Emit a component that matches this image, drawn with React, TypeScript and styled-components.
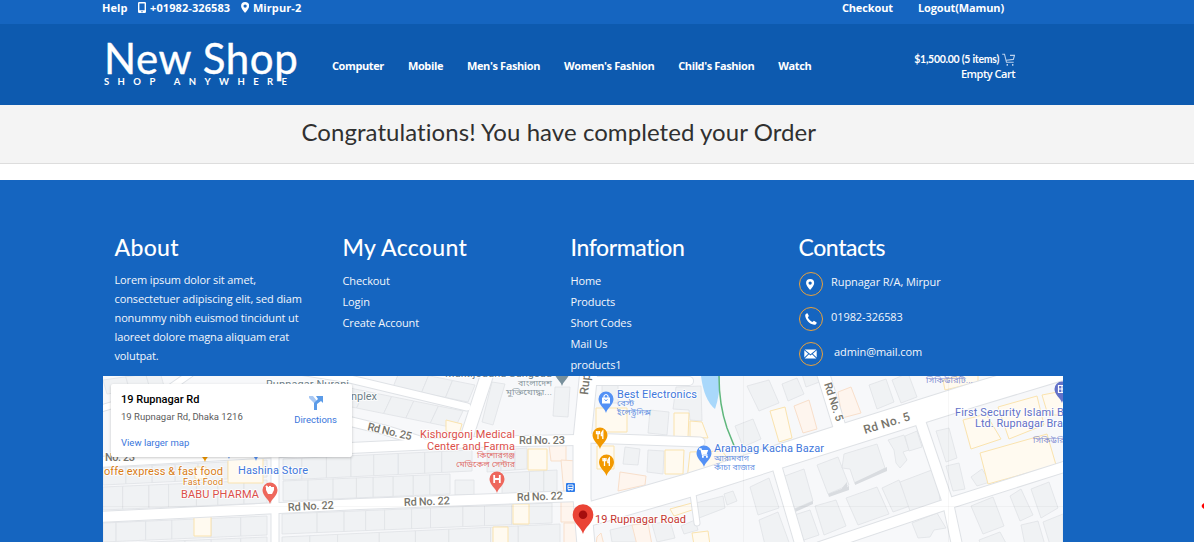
import React from "react";
import styled, { createGlobalStyle } from "styled-components";

const GlobalStyle = createGlobalStyle`
  * { box-sizing: border-box; }
  body { margin: 0; background: #fff; overflow: hidden; font-family: "Open Sans", sans-serif; font-size: 11px; }
`;
const display = `"Lato", sans-serif`;

const Page = styled.div`width: 1194px; height: 542px; overflow: hidden; background: #fff;`;
const TopBar = styled.div`
  height: 24px; background: #1565c0; color: #fff; font-weight: 700; line-height: 16px;
  padding: 0 190px 0 102px; display: flex; justify-content: space-between;
`;
const Group = styled.div<{ $gap: number; $track: number }>`display: flex; gap: ${(p) => p.$gap}px; letter-spacing: ${(p) => p.$track}px;`;
const TopItem = styled.span`display: flex; gap: 4px; white-space: nowrap; svg { margin-top: 2px; }`;
const Header = styled.header`
  height: 81px; background: #0d5aaf; color: #fff; padding-left: 104px; display: flex;
`;
const Logo = styled.div`width: 228px; padding-top: 11px; font-family: ${display}; white-space: nowrap;`;
const LogoName = styled.div`font-size: 42px; line-height: 46px; letter-spacing: 0.6px; -webkit-text-stroke: 0.4px #fff;`;
const LogoTag = styled.div`font-size: 9.5px; line-height: 10px; letter-spacing: 8.4px; font-weight: 700; margin-top: -4px;`;
const Nav = styled.nav`display: flex; gap: 24px; width: 582px; padding-top: 34px; font-weight: 700; letter-spacing: -0.39px; line-height: 16px; white-space: nowrap;`;
const Cart = styled.div`width: 101px; padding-top: 27px; display: flex; flex-direction: column; align-items: flex-end; line-height: 16px; white-space: nowrap;`;
const CartTotal = styled.div`font-family: ${display}; font-weight: 700; font-size: 10.5px; letter-spacing: -0.27px; display: flex; gap: 3px; svg { margin-top: 2px; }`;
const EmptyCart = styled.div`font-weight: 600; letter-spacing: -0.5px; margin-top: -1px;`;
const Banner = styled.div`
  height: 59px; background: #f4f4f4; border-bottom: 1px solid #ddd; padding: 11px 0 0 301.500px;
  font-family: ${display}; font-size: 24px; line-height: 32px; letter-spacing: 0.06px; color: #303030; white-space: nowrap;
`;
const Footer = styled.footer`margin-top: 16px; height: 362px; background: #1565c0; color: #f3f6fb; padding-left: 103px;`;
const Columns = styled.div`height: 196px; padding: 51px 0 0 11.500px; display: flex; letter-spacing: -0.12px;`;
const Column = styled.section`width: 228px; white-space: nowrap;`;
const Heading = styled.h3<{ $track: number }>`margin: 0; color: #fff; font: 500 23px/32px ${display}; letter-spacing: ${(p) => p.$track}px;`;
const About = styled.p`margin: 7px 0 0; line-height: 19px;`;
const Links = styled.div`display: flex; flex-direction: column; margin-top: 7px; line-height: 21px;`;
const Contact = styled.div<{ $gap?: number }>`display: flex; gap: ${(p) => p.$gap ?? 8.5}px; height: 35px; line-height: 20px; letter-spacing: -0.08px;`;
const Contacts = styled.div`margin-top: 9px;`;
const Ring = styled.span`
  width: 24px; height: 24px; border: 1px solid #e9a13b; border-radius: 50%;
  display: flex; align-items: center; justify-content: center;
`;
const MapFrame = styled.div`position: relative; width: 960px; height: 166px; overflow: hidden; font-family: Roboto, sans-serif;`;
const PlaceCard = styled.div`
  position: absolute; left: 8px; top: 8px; width: 241px; height: 73px; background: #fff; border-radius: 2px;
  box-shadow: 0 1px 3px rgba(0,0,0,.22); padding: 8px 15px 0 10px; display: flex; justify-content: space-between; white-space: nowrap;
`;
const PlaceName = styled.div`font-size: 11px; line-height: 15px; font-weight: 500; color: #000;`;
const PlaceAddress = styled.div`font-size: 9.5px; line-height: 18px; margin-top: 1px; color: #5b5b5b;`;
const PlaceLink = styled.div`font-size: 9.5px; line-height: 14px; margin-top: 10px; color: #3a76dc;`;
const Directions = styled.div`font-size: 9.5px; line-height: 14px; color: #3a76dc; display: flex; flex-direction: column; align-items: center; padding-top: 3px; gap: 3px;`;
const Notice = styled.svg`position: absolute; left: 1201px; top: 503px;`;

const Marker = ({ h }: { h: number }) => (
  <svg width={h * 0.75} height={h} viewBox="0 0 9 12" fill="#fff"><path fillRule="evenodd" d="M4.5 0A4.4 4.4 0 0 0 .1 4.4C.1 7.6 4.5 12 4.5 12s4.4-4.4 4.4-7.6A4.4 4.4 0 0 0 4.5 0Zm0 2.6a1.8 1.8 0 1 1 0 3.6 1.8 1.8 0 0 1 0-3.6Z" /></svg>
);
const Phone = () => (
  <svg width="8" height="11" viewBox="0 0 8 11"><path fill="#fff" fillRule="evenodd" d="M1.2 0h5.6Q8 0 8 1.2v8.6Q8 11 6.8 11H1.2Q0 11 0 9.800V1.200Q0 0 1.200 0ZM1.400 1.500v6.800h5.200V1.500ZM3.300 9.200v1h1.400v-1Z" /></svg>
);
const Handset = () => (
  <svg width="12" height="12" viewBox="0 0 12 12" fill="#fff"><path d="M2.500.2 3.900 2.900 2.800 4.200C3.500 6 5.600 8.200 7.500 9l1.400-1.200 2.800 1.600c0 1.500-1.200 2.500-2.600 2.400C4.500 11.400.4 6.500.2 2.600.2 1.200 1.100.2 2.500.2Z" /></svg>
);
const Envelope = () => (
  <svg width="13" height="10" viewBox="0 0 13 10"><path fill="#fff" d="M.7.400h11.600L6.500 5.200ZM.3 1.300 4.200 4.700.3 8.600ZM12.700 1.300 8.800 4.700l3.900 3.900ZM5 5.300l1.500 1.200L8 5.300l4.300 4.200H.7Z" /></svg>
);
const CartIcon = () => (
  <svg width="13" height="13" viewBox="0 0 13 13" fill="none" stroke="#b9d0ec" strokeWidth="1.100"><path d="M.2 1.200h2.300l2 8.100h7.200M4.300 7.200l7-.8 1.200-4H8" /><path d="M4.600 11.800h1.400M10 11.800h1.400" strokeWidth="1.700" /></svg>
);

/** A strip of adjoining plots between two points, cut at the given fractions. */
const Plots = ({ x, y, x2, y2, h, cuts, lean = 0 }: { x: number; y: number; x2: number; y2: number; h: number; cuts: number[]; lean?: number }) => {
  const c = [0, ...cuts, 1];
  const at = (t: number) => [x + (x2 - x) * t, y + (y2 - y) * t];
  return (
    <>
      {c.slice(1).map((t, i) => {
        const [ax, ay] = at(c[i]);
        const [bx, by] = at(t);
        return <path key={i} d={`M${ax} ${ay}L${bx} ${by}L${bx + lean} ${by + h}L${ax + lean} ${ay + h}Z`} />;
      })}
    </>
  );
};

const roads: [string, number][] = [
  ["M280 368L350 379L467 407", 7],
  ["M103 408L170 388L190 374", 6],
  ["M340 419L385 430L420 441", 9],
  ["M100 462L350 448L476 442L578 440", 10],
  ["M488 372L465 442", 12],
  ["M100 517L360 504L580 496", 10],
  ["M275 450V545", 7],
  ["M589 370L582 440L582 498L586 545", 17],
  ["M586 438L700 442", 9],
  ["M592 381L689 381", 8],
  ["M586 515L690 485L840 437L970 396L1070 366", 23],
  ["M822 370L842 435", 12],
  ["M693 494L697 523", 5],
  ["M775 460L800 545", 9],
  ["M918 415L948 503L957 545", 10],
  ["M820 547L947 504L1070 465", 10],
];
const buildings = [
  "M492 382L505 384L493 425L482 422Z", "M555 387H570L568 417L553 416Z", "M455 480H474V495H455Z",
  "M602 385H618V403H602Z", "M676 387L701 386L702 421L690 420L689 410L673 409Z",
  "M650 410L669 412L667 435L648 433Z", "M625 447L640 449L638 465L623 464Z", "M648 450L664 451L663 474L647 472Z",
  "M747 386L769 380L779 403L759 411Z", "M782 384L797 378L804 394L788 401Z", "M802 374L820 374L822 381L806 387Z",
  "M735 426L753 419L761 439L743 447Z", "M696 503L723 496L725 508L699 518Z", "M724 494L733 491L737 501L727 505Z",
  "M750 487L769 478L779 508L758 515Z", "M759 520L778 512L790 545H765Z", "M782 477L804 469L813 501L792 510Z",
  "M817 465L838 457L849 485L828 494Z", "M791 516L810 510L819 535L798 542Z", "M815 506L836 500L846 526L824 535Z",
  "M844 454L877 444L885 468L855 484L850 469L842 468Z", "M869 385L886 379L894 402L877 409Z", "M892 380L908 373L917 397L901 403Z",
  "M888 440L904 435L909 450L903 452L907 460L900 468L896 463L894 450Z", "M905 436L917 431L922 447L909 451Z",
  "M846 498L877 487L889 514L858 525Z", "M882 488L899 480L910 506L893 512Z", "M900 482L937 468L940 502L910 511Z",
  "M936 431L949 428L957 458L946 462Z", "M946 466L959 463L965 489L953 491Z", "M971 477L982 469L990 482L977 486Z",
  "M971 506L993 497L1004 526L983 534Z", "M1010 496L1021 489L1033 515L1020 521Z", "M1031 489L1049 482L1058 508L1041 518Z",
  "M912 523L937 513L946 528L934 530L930 537L918 538Z", "M979 540L1000 532L1007 545H981Z", "M1021 525L1038 521L1045 545H1025Z", "M1043 522L1063 514V545H1050Z",
  "M610 530L632 525L638 542H612Z", "M652 524L670 521L675 538L657 542Z", "M681 526L695 520L698 530L684 534Z",
];
const shops = [
  "M195 467H206V479H195Z", "M228 458H263V483H228Z", "M194 516H211V536H194Z", "M446 420L462 424L459 434L446 431Z",
  "M528 449H547V470H528Z", "M513 504H529V524H513Z", "M493 527H508V545H493Z", "M596 408H627V432H596Z",
  "M597 446H614V469H597Z", "M674 413H689L688 438H674Z", "M690 421L702 422L708 438L690 437Z", "M665 450H684L683 474H665Z",
  "M690 452L722 451L735 468L687 480Z", "M770 411L785 407L792 438L779 442Z", "M670 509L692 503L695 509L674 516Z",
  "M692 533L708 531L710 545H694Z", "M963 420L986 414L1001 439L971 449Z", "M998 407L1037 396L1044 425L1009 439Z",
  "M1042 395L1068 390V415H1048Z", "M980 453L1047 434L1056 465L988 484Z", "M943 380L978 371V382L945 390Z",
];
const arcades = ["M549 445H566V461H551Z", "M561 460L578 461L580 492L564 494Z", "M561 498L575 500V522H561Z", "M564 523H580V545H564Z",
  "M620 472L646 476L645 485L618 491Z", "M794 406L809 400L817 429L803 433Z", "M838 392L851 387L861 413L842 418Z", "M597 537L601 533L604 545H596Z", "M632 525L648 523L652 545H637Z"];

const Pin = ({ x, y, color, s = 1, children }: { x: number; y: number; color: string; s?: number; children?: React.ReactNode }) => (
  <g transform={`translate(${x} ${y}) scale(${s})`}>
    <path d="M0 0C-1.200-5-7.500-8-7.500-14A7.500 7.500 0 0 1 7.500-14C7.500-8 1.200-5 0 0Z" fill={color} />{children}
  </g>
);
const Fork = () => <path d="M-3.500-18v2.500h3V-18M-2-18v8M2.800-10v-8q-2 2-1.500 4.500H2.800" fill="none" stroke="#fff" strokeWidth="1.300" />;

type LabelProps = { x: number; y: number; w?: number; size?: number; color: string; rotate?: number; children: string };
const Label = ({ x, y, w, size = 11, color, rotate = 0, children }: LabelProps) => (
  <text x={x} y={y} textLength={w} fontSize={size} fill={color} stroke="#fff" strokeWidth="2" strokeOpacity=".8" paintOrder="stroke"
    strokeLinejoin="round" fontWeight={color === road ? 500 : 400} transform={`rotate(${rotate} ${x} ${y})`}>{children}</text>
);
const Bengali = ({ x, y, w, color, children }: LabelProps) => (
  <text x={x} y={y} textLength={w} lengthAdjust="spacingAndGlyphs" fontSize="8.500" fill={color} fillOpacity=".8">{children}</text>
);

const road = "#77756c", red = "#dc4f4a", blue = "#3f78dc", amber = "#d97d17", slate = "#6d7f88", violet = "#6271c8";

const CityMap = () => (
  <svg width="960" height="166" viewBox="103 376 960 166" fontFamily='Roboto, "Noto Sans Bengali", "Noto Sans", sans-serif' display="block">
    <path d="M103 376h960v166H103Z" fill="#f7f8fa" />
    <g fill="#f0f2f4" stroke="#dfe2e6" strokeWidth=".8">
      <Plots x={103} y={468} x2={267} y2={460} h={17} cuts={[0.14, 0.3, 0.44, 0.58, 0.76, 0.9]} />
      <Plots x={103} y={487} x2={267} y2={480} h={23} cuts={[0.12, 0.28, 0.4, 0.57, 0.7, 0.86]} />
      <Plots x={283} y={459} x2={472} y2={450} h={21} cuts={[0.1, 0.23, 0.36, 0.48, 0.61, 0.75, 0.84]} />
      <Plots x={283} y={481} x2={450} y2={474} h={20} cuts={[0.15, 0.3, 0.44, 0.54, 0.66, 0.78, 0.88]} />
      <Plots x={487} y={451} x2={527} y2={448} h={21} cuts={[0.35, 0.7]} />
      <Plots x={502} y={473} x2={557} y2={470} h={21} cuts={[0.5, 0.76]} />
      <Plots x={103} y={523} x2={267} y2={516} h={19} cuts={[0.08, 0.26, 0.42, 0.66, 0.84]} />
      <Plots x={103} y={544} x2={267} y2={537} h={19} cuts={[0.13, 0.3, 0.5, 0.66, 0.84]} />
      <Plots x={282} y={514} x2={552} y2={503} h={20} cuts={[0.13, 0.23, 0.31, 0.38, 0.48, 0.55, 0.67, 0.75, 0.85]} />
      <Plots x={282} y={537} x2={560} y2={524} h={20} cuts={[0.1, 0.2, 0.35, 0.48, 0.6, 0.75, 0.85]} />
      <Plots x={340} y={386} x2={463} y2={411} h={17} cuts={[0.2, 0.42, 0.6, 0.8]} lean={-8} />
      <Plots x={400} y={370} x2={475} y2={385} h={17} cuts={[0.38, 0.7]} lean={-7} />
      <Plots x={103} y={380} x2={160} y2={372} h={14} cuts={[0.4, 0.75]} lean={4} />
      {buildings.map((d) => <path key={d} d={d} />)}
    </g>
    <path d="M828 494L849 486V490L829 497ZM792 510L813 501V504L793 513ZM855 482L887 467V471L855 485ZM842 488L847 482V487L842 491Z" fill="#d9dce0" />
    <g fill="#fffaf0" stroke="#fae3ae" strokeWidth="1">{shops.map((d) => <path key={d} d={d} />)}</g>
    <g fill="#fef5ee" stroke="#f8dfcb" strokeWidth="1">{arcades.map((d) => <path key={d} d={d} />)}</g>
    <g fill="none" strokeLinejoin="round">
      {roads.map(([d, w]) => <path key={d} d={d} stroke="#dfe2e6" strokeWidth={w + 2} strokeLinecap="round" />)}
      {roads.map(([d, w]) => <path key={d} d={d} stroke="#fff" strokeWidth={w} strokeLinecap="round" />)}
    </g>
    <path d="M701 376H720Q720 395 715 409Q704 400 701 376Z" fill="#a9d8fb" />
    <path d="M719 376Q719 405 727 428L735 448" fill="none" stroke="#5fb77c" strokeWidth="1.500" />
    <path d="M103 506.500H1063M743.500 376V542M948.500 376V542" stroke="#000" strokeOpacity=".03" />

    <Label x={266} y={388} w={83} color={slate}>Rupnagar Nurani</Label>
    <Label x={351} y={400} w={26} color={slate}>nplex</Label>
    <Label x={445} y={377} w={107} color={slate}>Muktijoddha Sangsad</Label>
    <Bengali x={518} y={386} w={34} color={slate}>বাংলাদেশ</Bengali>
    <Bengali x={506} y={395} w={46} color={slate}>মুক্তিযোদ্ধা...</Bengali>
    <Label x={367} y={430} w={45} color={road} rotate={13}>Rd No. 25</Label>
    <Label x={519} y={444} w={46} color={road}>Rd No. 23</Label>
    <Label x={105} y={461} w={30} color={road}>No. 23</Label>
    <Label x={288} y={511} w={46} color={road} rotate={-3}>Rd No. 22</Label>
    <Label x={404} y={506} w={46} color={road} rotate={-2}>Rd No. 22</Label>
    <Label x={517} y={501} w={46} color={road} rotate={-2}>Rd No. 22</Label>
    <Label x={588} y={395} size={12} color={road} rotate={-84}>Rupnagar Rd</Label>
    <Label x={824} y={384} w={40} color={road} rotate={72}>Rd No. 5</Label>
    <Label x={865} y={434} w={48} size={12} color={road} rotate={-17}>Rd No. 5</Label>
    <Label x={420} y={438} w={95} color={red}>Kishorgonj Medical</Label>
    <Label x={427} y={450} w={88} color={red}>Center and Farma</Label>
    <Bengali x={477} y={458} w={38} color={red}>কিশোরগঞ্জ</Bengali>
    <Bengali x={456} y={467} w={59} color={red}>মেডিকেল সেন্টার</Bengali>
    <Label x={181} y={498} w={78} color={red}>BABU PHARMA</Label>
    <Label x={104} y={475} w={119} color={amber}>offe express &amp; fast food</Label>
    <Label x={183} y={485} w={40} size={9} color={amber}>Fast Food</Label>
    <Label x={238} y={474} w={70} color={blue}>Hashina Store</Label>
    <Label x={617} y={398} w={80} color={blue}>Best Electronics</Label>
    <Bengali x={617} y={406} w={17} color={blue}>বেস্ট</Bengali>
    <Bengali x={617} y={415} w={34} color={blue}>ইলেক্ট্রনিক্স</Bengali>
    <Label x={714} y={452} w={110} color={blue}>Arambag Kacha Bazar</Label>
    <Bengali x={714} y={461} w={35} color={blue}>আরামবাগ</Bengali>
    <Bengali x={714} y={470} w={41} color={blue}>কাঁচা বাজার</Bengali>
    <Bengali x={926} y={383} w={47} color={violet}>সিকিউরিটি...</Bengali>
    <Label x={955} y={416} w={115} color={violet}>First Security Islami Ba</Label>
    <Label x={975} y={427} w={94} color={violet}>Ltd. Rupnagar Bran</Label>
    <Bengali x={1033} y={443} w={46} color={violet}>সিকিউরিটি...</Bengali>
    <Label x={595} y={523} w={91} color="#c5352f">19 Rupnagar Road</Label>

    <Pin x={497} y={493} color="#ee675c"><path d="M-2.800-18v8M2.800-18v8M-2.800-14h5.600" stroke="#fff" strokeWidth="1.800" /></Pin>
    <Pin x={270} y={504} color="#ee675c"><path d="M-4-17h8v3l-2 4h-4l-2-4Z" fill="#fff" /><path d="M-4-18l2 2M0-18v1" stroke="#fff" strokeWidth="2" /></Pin>
    <Pin x={606} y={413} color="#5491f5"><path d="M-4-15.500h8v6h-8Z" fill="#fff" /><path d="M-2-15v-2q2-3 4 0v2" fill="none" stroke="#fff" strokeWidth="1.200" /><path d="M-1.500-13.500q1.500 2.500 3 0" fill="none" stroke="#5491f5" /></Pin>
    <Pin x={600} y={449} color="#f29900"><Fork /></Pin>
    <Pin x={606.500} y={476} color="#f29900"><Fork /></Pin>
    <Pin x={704} y={467} color="#5491f5"><path d="M-5-18h2l1.500 6h5" fill="none" stroke="#fff" strokeWidth="1.300" /><path d="M-2.800-17h7l-1.500 4h-4.500ZM-2-11h1.800v1.800H-2ZM2-11h1.800v1.800H2Z" fill="#fff" /></Pin>
    <Pin x={1062} y={403} color={violet}><path d="M-3.500-17.500h7v7h-7ZM0-17.500v7M-3.500-14h7" fill="none" stroke="#fff" strokeWidth="1.200" /></Pin>
    <Pin x={562} y={386} color="#78909c" />
    <Pin x={205} y={462} color="#f29900" /><Pin x={229} y={459} color="#5491f5" /><Pin x={256} y={461} color="#5491f5" />
    <Pin x={583} y={534} color="#ea4335" s={1.380}><circle cy="-14" r="3.100" fill="#a50e0e" /></Pin>
    <rect x="566" y="483" width="9" height="9" rx="1" fill="#2d7bea" /><path d="M568 485h5v4.500h-5ZM568 487.500h5M569 490v1M572 490v1" stroke="#fff" fill="none" strokeWidth=".9" />
  </svg>
);

export default function App() {
  return (
    <>
      <GlobalStyle />
      <Page>
        <TopBar>
          <Group $gap={10.5} $track={0.08}>
            <TopItem>Help</TopItem>
            <TopItem><Phone />+01982-326583</TopItem>
            <TopItem><Marker h={11} />Mirpur-2</TopItem>
          </Group>
          <Group $gap={25} $track={-0.13}><TopItem>Checkout</TopItem><TopItem>Logout(Mamun)</TopItem></Group>
        </TopBar>
        <Header>
          <Logo><LogoName>New Shop</LogoName><LogoTag>SHOP ANYWHERE</LogoTag></Logo>
          <Nav>{["Computer", "Mobile", "Men's Fashion", "Women's Fashion", "Child's Fashion", "Watch"].map((t) => <span key={t}>{t}</span>)}</Nav>
          <Cart><CartTotal>$1,500.00 (5 items)<CartIcon /></CartTotal><EmptyCart>Empty Cart</EmptyCart></Cart>
        </Header>
        <Banner>Congratulations! You have completed your Order</Banner>
        <Footer>
          <Columns>
            <Column><Heading $track={0.3}>About</Heading>
              <About>Lorem ipsum dolor sit amet,<br />consectetuer adipiscing elit, sed diam<br />nonummy nibh euismod tincidunt ut<br />laoreet dolore magna aliquam erat<br />volutpat.</About>
            </Column>
            <Column><Heading $track={0.3}>My Account</Heading><Links><span>Checkout</span><span>Login</span><span>Create Account</span></Links></Column>
            <Column><Heading $track={-0.42}>Information</Heading><Links>{["Home", "Products", "Short Codes", "Mail Us", "products1"].map((t) => <span key={t}>{t}</span>)}</Links></Column>
            <Column><Heading $track={-0.42}>Contacts</Heading>
              <Contacts>
                <Contact><Ring><Marker h={11} /></Ring>Rupnagar R/A, Mirpur</Contact>
                <Contact><Ring><Handset /></Ring>01982-326583</Contact>
                <Contact $gap={11.5}><Ring><Envelope /></Ring>admin@mail.com</Contact>
              </Contacts>
            </Column>
          </Columns>
          <MapFrame>
            <CityMap />
            <PlaceCard>
              <div><PlaceName>19 Rupnagar Rd</PlaceName><PlaceAddress>19 Rupnagar Rd, Dhaka 1216</PlaceAddress><PlaceLink>View larger map</PlaceLink></div>
              <Directions>
                <svg width="14" height="15" viewBox="0 0 14 15"><path d="M0 1h4l4 5v9H5V8L0 3Z" fill="#a8c8f4" /><path d="M5 15V8l4-4-2-3h7v7l-2-2-4 3v6Z" fill="#5b9be8" /></svg>
                Directions
              </Directions>
            </PlaceCard>
          </MapFrame>
        </Footer>
      </Page>
      <Notice width="3" height="6" viewBox="0 0 3 6"><path d="M3 0V6L.8 4V2Z" fill="#f00" /></Notice>
    </>
  );
}
